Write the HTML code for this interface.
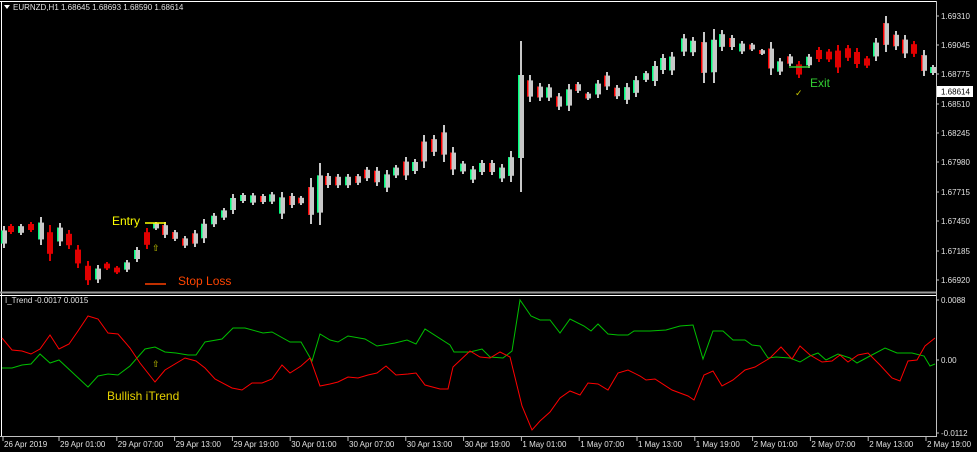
<!DOCTYPE html>
<html><head><meta charset="utf-8"><style>
html,body{margin:0;padding:0;background:#000;width:977px;height:452px;overflow:hidden}
svg{display:block}
text{font-family:"Liberation Sans",sans-serif}
</style></head><body>
<svg id="s" width="977" height="452" xmlns="http://www.w3.org/2000/svg">
<rect width="977" height="452" fill="#000"/>
<line x1="0" y1="1.5" x2="937" y2="1.5" stroke="#fff"/>
<line x1="1.5" y1="1" x2="1.5" y2="436" stroke="#fff"/>
<line x1="0" y1="292.5" x2="937" y2="292.5" stroke="#9a9a9a" stroke-width="2"/>
<line x1="0" y1="295.5" x2="937" y2="295.5" stroke="#fff"/>
<line x1="936.5" y1="1" x2="936.5" y2="437" stroke="#c0c0c0"/>
<line x1="0" y1="436.5" x2="937" y2="436.5" stroke="#c0c0c0"/>
<g id="candles"></g>
<g id="ind"></g>
<g font-size="8" fill="#e0e0e0">
<text x="13" y="10">EURNZD,H1  1.68645 1.68693 1.68590 1.68614</text>
<path d="M4 5h6l-3 4z" fill="#fff"/>
<text x="5" y="303">I_Trend -0.0017 0.0015</text>
</g>
<g font-size="8" fill="#e0e0e0" id="axis"></g>
<rect x="937" y="86" width="36" height="11" fill="#fff"/>
<text x="941" y="94.5" font-size="8" fill="#000">1.68614</text>
<line x1="145" y1="223" x2="166" y2="223" stroke="#ffff00" stroke-width="1.5"/>
<text x="112" y="225" font-size="12" fill="#ffff00">Entry</text>
<text x="152" y="251" font-size="9" fill="#c8c800">⇧</text>
<line x1="145" y1="284" x2="166" y2="284" stroke="#ff4000" stroke-width="1.5"/>
<text x="178" y="285" font-size="12" fill="#ff4500">Stop Loss</text>
<line x1="789" y1="67" x2="810" y2="67" stroke="#32cd32" stroke-width="1.5"/>
<text x="810" y="87" font-size="12" fill="#32cd32">Exit</text>
<text x="795" y="96" font-size="9" fill="#c8c800">✓</text>
<text x="152" y="367" font-size="9" fill="#c8c800">⇧</text>
<text x="107" y="400" font-size="12" fill="#e6d200">Bullish iTrend</text>
</svg>
<script>
var NS="http://www.w3.org/2000/svg";
function el(t,a,p){var e=document.createElementNS(NS,t);for(var k in a)e.setAttribute(k,a[k]);p.appendChild(e);return e;}
var c=[[4,226,248,'g'],[11,224,234,'r'],[21,224,235,'g'],[31,222,232,'r'],[41,217,245,'g'],[50,225,261,'r'],[60,223,246,'g'],[69,230,249,'r'],[78,245,268,'r'],[88,261,285,'r'],[98,265,283,'g'],[107,262,270,'r'],[117,266,274,'r'],[127,260,272,'g'],[137,247,262,'g'],[147,228,249,'r'],[156,222,230,'g'],[165,222,238,'x'],[175,230,241,'x'],[185,236,248,'x'],[195,230,247,'x'],[204,219,243,'g'],[214,213,227,'g'],[224,208,220,'g'],[233,194,214,'g'],[243,193,203,'g'],[253,193,205,'g'],[263,194,204,'x'],[272,192,204,'g'],[282,192,219,'g'],[292,193,208,'x'],[301,196,205,'x'],[311,178,224,'x'],[320,163,225,'g'],[328,173,188,'x'],[338,174,188,'x'],[348,174,188,'g'],[358,174,185,'x'],[367,167,181,'x'],[377,167,186,'x'],[387,170,192,'g'],[396,165,178,'g'],[406,157,180,'x'],[415,159,174,'g'],[424,135,168,'x'],[434,135,156,'x'],[444,125,162,'x'],[453,147,175,'x'],[463,161,174,'g'],[473,166,183,'g'],[482,160,175,'g'],[492,160,175,'x'],[502,164,182,'g'],[511,151,182,'g'],[521,41,192,'g'],[530,75,102,'x'],[540,83,101,'x'],[549,84,101,'g'],[559,93,110,'x'],[569,84,111,'g'],[578,82,93,'x'],[588,92,100,'x'],[598,80,98,'g'],[607,72,90,'x'],[617,85,99,'x'],[627,83,104,'g'],[636,76,97,'g'],[646,71,82,'g'],[655,61,86,'g'],[663,54,74,'g'],[672,52,75,'g'],[684,34,56,'g'],[693,37,56,'g'],[704,32,83,'x'],[714,29,83,'g'],[722,30,51,'g'],[732,35,50,'x'],[742,41,54,'g'],[752,43,51,'x'],[762,49,55,'x'],[771,42,75,'x'],[780,58,75,'g'],[790,54,66,'x'],[799,61,78,'r'],[809,54,68,'g'],[819,47,62,'r'],[829,49,62,'r'],[838,45,73,'r'],[848,45,61,'r'],[857,48,68,'r'],[867,56,68,'r'],[876,38,61,'g'],[886,16,52,'x'],[896,31,50,'x'],[905,35,58,'x'],[914,41,57,'r'],[924,50,76,'x'],[933,65,75,'g']];
var g=document.getElementById('candles');
c.forEach(function(d){var x=d[0],t=d[1],b=d[2],h=b-t,bt=t+h*0.2,bb=b-h*0.2;if(d[0]==521){bt=75;bb=158;}
if(d[3]=='r'){el('line',{x1:x,y1:t,x2:x,y2:b,stroke:'#e00000','stroke-width':2},g);el('rect',{x:x-3,y:bt,width:6,height:bb-bt,fill:'#e00000'},g);}
else{el('line',{x1:x,y1:t,x2:x,y2:b,stroke:'#c8c8c8','stroke-width':2},g);el('rect',{x:x-3,y:bt,width:6,height:bb-bt,fill:'#c8c8c8'},g);el('rect',{x:x-3,y:bt,width:1.5,height:bb-bt,fill:d[3]=='g'?'#00ff7f':'#ff0000'},g);}
});
var gr=[[2,368],[12,368],[22,365],[31,364],[40,354],[50,363],[59,360],[88,387],[98,376],[108,374],[118,375],[130,366],[145,349],[155,347],[165,352],[176,353],[188,355],[196,355],[205,342],[222,339],[233,328],[245,328],[263,333],[272,332],[290,342],[301,342],[312,361],[320,334],[330,340],[338,342],[348,336],[365,339],[377,346],[395,343],[407,340],[416,344],[425,329],[450,345],[454,352],[470,352],[482,349],[490,357],[503,358],[512,351],[520,300],[531,316],[540,320],[550,320],[560,333],[570,319],[584,326],[591,331],[598,324],[608,334],[618,335],[628,335],[634,331],[650,331],[666,330],[680,326],[693,325],[703,359],[713,331],[723,331],[733,340],[745,340],[752,345],[760,346],[768,358],[776,357],[790,358],[800,362],[810,356],[818,353],[826,360],[838,354],[850,358],[857,363],[870,356],[885,348],[897,353],[912,353],[924,356],[930,366],[935,364]];
var rd=[[2,338],[12,350],[22,351],[31,354],[40,349],[50,335],[59,349],[69,344],[78,331],[88,316],[98,319],[108,333],[118,334],[130,348],[140,363],[155,382],[165,370],[185,358],[196,361],[205,368],[215,379],[232,388],[242,390],[252,383],[262,383],[272,379],[282,365],[290,373],[301,366],[310,358],[320,386],[330,384],[338,382],[348,377],[358,378],[368,375],[377,373],[386,366],[396,375],[408,374],[416,373],[425,385],[440,389],[448,389],[453,367],[470,351],[480,357],[490,358],[500,352],[510,357],[522,406],[532,430],[540,421],[550,412],[560,398],[570,391],[580,395],[588,383],[598,384],[608,390],[618,373],[628,370],[640,376],[646,380],[655,379],[672,390],[688,396],[694,400],[704,375],[713,371],[722,386],[733,380],[745,370],[755,367],[770,358],[781,347],[792,359],[800,346],[810,355],[822,362],[832,361],[840,355],[848,362],[858,355],[868,353],[880,365],[892,378],[900,381],[908,361],[917,360],[925,346],[935,338]];
var ig=document.getElementById('ind');
function pl(a,col){el('polyline',{points:a.map(function(p){return p.join(',')}).join(' '),fill:'none',stroke:col,'stroke-width':1},ig);}
pl(gr,'#00c000');pl(rd,'#ff0000');
var ax=document.getElementById('axis');
[["1.69310",16],["1.69045",45],["1.68775",74],["1.68510",104],["1.68245",133],["1.67980",162],["1.67715",192],["1.67450",221],["1.67185",251],["1.66920",280],["0.0088",300],["0.00",360],["-0.0112",433]].forEach(function(d){var t=el('text',{x:941,y:d[1]+3},ax);t.textContent=d[0];el('line',{x1:936,y1:d[1],x2:939,y2:d[1],stroke:'#c0c0c0'},ax);});
var tl=["26 Apr 2019","29 Apr 01:00","29 Apr 07:00","29 Apr 13:00","29 Apr 19:00","30 Apr 01:00","30 Apr 07:00","30 Apr 13:00","30 Apr 19:00","1 May 01:00","1 May 07:00","1 May 13:00","1 May 19:00","2 May 01:00","2 May 07:00","2 May 13:00","2 May 19:00"];
tl.forEach(function(s,i){var x=i==0?3:59+57.8*(i-1);el('line',{x1:x,y1:437,x2:x,y2:441,stroke:'#c0c0c0'},ax);var t=el('text',{x:x+1,y:447},ax);t.textContent=s;});
</script>
</body></html>
